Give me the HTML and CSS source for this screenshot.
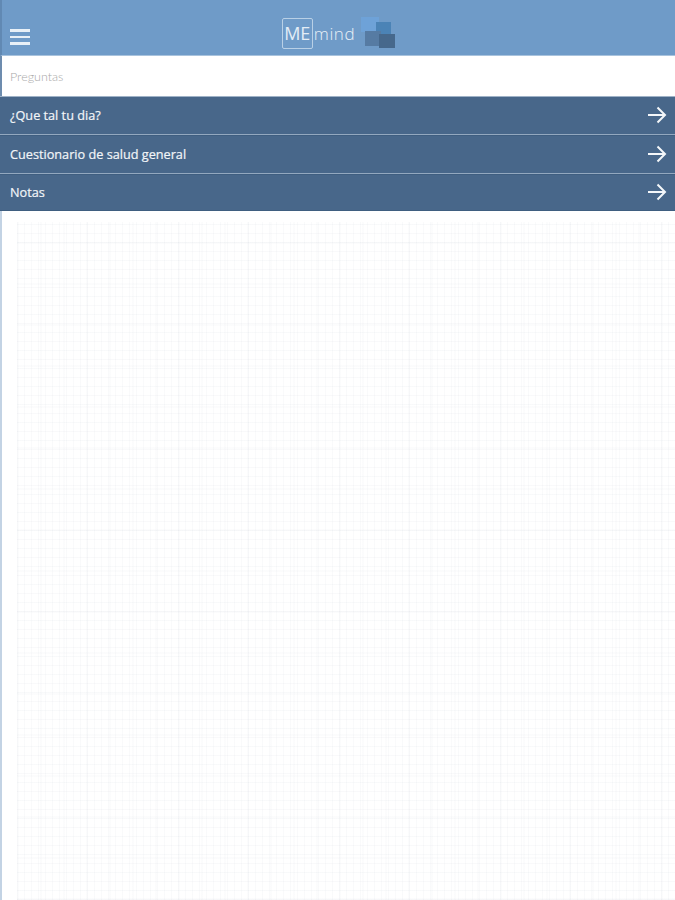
FILE: index.html
```html
<!DOCTYPE html>
<html lang="en">
<head>
    <meta charset="UTF-8">
    <meta name="viewport" content="width=device-width, initial-scale=1.0">
    <title>MEmind</title>
    <link rel="stylesheet" href="styles.css">
</head>
<body>
    <div class="app">
        <header class="topbar">
            <button class="menu-btn" aria-label="Menu">
                <span></span><span></span><span></span>
            </button>
            <div class="logo">
                <span class="logo-me">ME</span>
                <span class="logo-mind">mind</span>
                <svg class="logo-mark" width="34" height="31" viewBox="0 0 34 31">
                    <rect x="0" y="0" width="18" height="15" fill="#6ea2d8"/>
                    <rect x="15" y="5" width="15" height="15" fill="#4b83b6"/>
                    <rect x="4" y="14" width="16" height="15" fill="#567ba3"/>
                    <rect x="18" y="17" width="16" height="14" fill="#46688c"/>
                </svg>
            </div>
        </header>
        <div class="section-title">Preguntas</div>
        <ul class="list">
            <li class="list-item">
                <span>¿Que tal tu dia?</span>
                <svg class="arrow" width="20" height="20" viewBox="0 0 20 20"><path d="M1 10H18M10.500 2.500L18 10L10.500 17.500"/></svg>
            </li>
            <li class="list-item">
                <span>Cuestionario de salud general</span>
                <svg class="arrow" width="20" height="20" viewBox="0 0 20 20"><path d="M1 10H18M10.500 2.500L18 10L10.500 17.500"/></svg>
            </li>
            <li class="list-item">
                <span>Notas</span>
                <svg class="arrow" width="20" height="20" viewBox="0 0 20 20"><path d="M1 10H18M10.500 2.500L18 10L10.500 17.500"/></svg>
            </li>
        </ul>
        <main class="content">
            <div class="texture"></div>
        </main>
    </div>
</body>
</html>
```
FILE: styles.css
```css
html, body {
    height: 100%;
}
body {
    margin: 0;
    font-family: "Open Sans", "Liberation Sans", sans-serif;
    background-color: #fff;
}
.app {
    display: flex;
    flex-direction: column;
    height: 900px;
    overflow: hidden;
}
.topbar {
    position: relative;
    box-sizing: border-box;
    flex: 0 0 56px;
    display: flex;
    align-items: center;
    justify-content: center;
    background-color: #6f9bc8;
    border-left: 2px solid #6189b3;
    border-bottom: 1px solid #a9c3dd;
}
.menu-btn {
    position: absolute;
    left: 8px;
    top: 29px;
    display: flex;
    flex-direction: column;
    gap: 4px;
    width: 20px;
    padding: 0;
    border: none;
    background: none;
}
.menu-btn span {
    display: block;
    height: 2.500px;
    background-color: #e8f0f7;
}
.logo {
    display: flex;
    align-items: center;
    margin: 11px 0 0 0;
    color: #e3edf6;
}
.logo-me {
    box-sizing: border-box;
    width: 31px;
    height: 31px;
    border: 1px solid #b9d0e6;
    border-radius: 2px;
    font-size: 18px;
    line-height: 29px;
    text-align: center;
}
.logo-mind {
    margin-left: 1px;
    font-size: 17px;
    font-weight: 300;
    letter-spacing: 0.6px;
    color: #e9f0f7;
}
.logo-mark {
    margin: -2px 0 0 6px;
}
.section-title {
    box-sizing: border-box;
    flex: 0 0 40px;
    padding: 1px 0 0 8px;
    font-family: "Lato", sans-serif;
    font-size: 12.500px;
    font-weight: 300;
    line-height: 40px;
    height: 40px;
    min-height: 0;
    overflow: hidden;
    color: #a8a8a8;
    background-color: #fff;
    border-left: 2px solid #6d8cae;
}
.list {
    list-style: none;
    margin: 0;
    padding: 0;
    background-color: #48678a;
}
.list-item {
    display: flex;
    align-items: center;
    justify-content: space-between;
    box-sizing: border-box;
    height: 39px;
    padding: 0 8px 2px 10px;
    border-top: 1px solid #3f5e80;
    border-bottom: 1px solid #93a8bf;
    font-size: 12.700px;
    font-weight: 400;
    color: #f2f5f8;
    -webkit-text-stroke: 0.2px #f2f5f8;
}
.list-item:first-child {
    border-top-color: #9fb2c7;
}
.list-item:last-child {
    height: 37px;
    border-bottom: 1px solid #3f5e80;
}
.arrow {
    fill: none;
    stroke: #f4f7fa;
    stroke-width: 2;
}
.content {
    flex: 1;
    display: flex;
    padding: 11px 0 0 15px;
    background-color: #fff;
    border-left: 2px solid #c3d3e4;
}
.texture {
    flex: 1;
    background-image:
        repeating-linear-gradient(90deg, rgba(110, 125, 150, 0.04) 0 1px, transparent 1px 7px),
        repeating-linear-gradient(90deg, rgba(110, 125, 150, 0.025) 0 2px, transparent 2px 23px),
        repeating-linear-gradient(0deg, rgba(110, 125, 150, 0.045) 0 1px, transparent 1px 9px),
        repeating-linear-gradient(0deg, rgba(110, 125, 150, 0.025) 0 2px, transparent 2px 41px);
}
```
